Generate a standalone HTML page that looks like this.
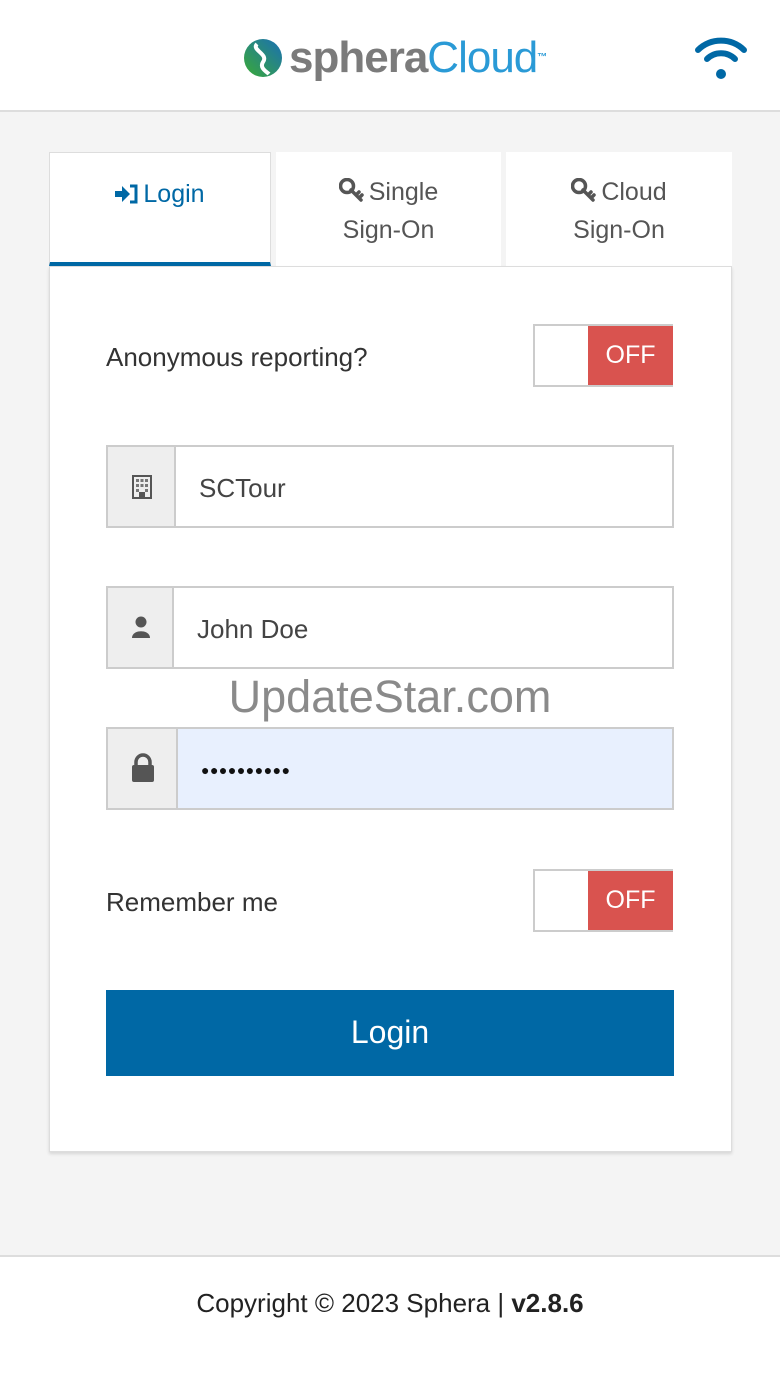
<!DOCTYPE html>
<html><head><meta charset="utf-8"><style>
*{box-sizing:border-box;margin:0;padding:0}
body{width:780px;height:1387px;background:#f4f4f4;font-family:"Liberation Sans",sans-serif;position:relative;overflow:hidden;color:#333}
.abs{position:absolute}
#hdr{left:0;top:0;width:780px;height:112px;background:#fff;border-bottom:2px solid #ddd}
.tab{top:152px;height:114px;background:#fff;text-align:center;font-size:25px;color:#555;line-height:38px}
.card{left:49px;top:266px;width:683px;height:886px;background:#fff;border:1px solid #ddd;box-shadow:0 2px 3px rgba(0,0,0,.12)}
.lbl{font-size:26px;color:#333}
.tog{width:140px;height:63px;border:2px solid #ccc;background:#fff}
.tog div{position:absolute;left:53px;top:0;width:85px;height:59px;background:#d9534f;color:#fff;font-size:25px;text-align:center;line-height:59px}
.inp{left:106px;width:568px;height:83px;border:2px solid #ccc;background:#fff}
.ib{position:absolute;left:0;top:0;height:79px;background:#eee;border-right:2px solid #ccc}
.it{position:absolute;top:2px;line-height:79px;font-size:26px;color:#444}
.key{display:inline-block;vertical-align:-2px;margin-right:4px}
</style></head><body>
<div id="hdr" class="abs">
<svg class="abs" style="left:243px;top:38px" width="42" height="40" viewBox="0 0 42 40"><defs><linearGradient id="g" x1="0" y1="1" x2="1" y2="0"><stop offset="0" stop-color="#3aaa35"/><stop offset="1" stop-color="#1a6fb5"/></linearGradient></defs><circle cx="20" cy="20" r="19" fill="url(#g)"/><path d="M14 6 C8 12 26 16 20 24 C16 30 24 34 26 36" stroke="#fff" stroke-width="4" fill="none"/></svg>
<div class="abs" style="left:289px;top:32px;font-size:44px;font-weight:bold;letter-spacing:-1px;line-height:52px"><span style="color:#7b7b7b">sphera</span><span style="color:#2a9ad6;font-weight:normal">Cloud</span><sup style="font-size:10px;color:#2a9ad6;vertical-align:top">™</sup></div>
<svg class="abs" style="left:694px;top:36px" width="54" height="44" viewBox="0 0 54 44"><path d="M4 14 A33 33 0 0 1 50 14" stroke="#0068a5" stroke-width="6" fill="none" stroke-linecap="round"/><path d="M13 23 A20 20 0 0 1 41 23" stroke="#0068a5" stroke-width="6" fill="none" stroke-linecap="round"/><circle cx="27" cy="38" r="5" fill="#0068a5"/></svg>
</div>
<div class="abs tab" style="left:49px;width:222px;border:1px solid #ddd;border-bottom:4px solid #0068a5;padding-top:22px;color:#0068a5"><svg class="key" width="24" height="20" viewBox="0 0 24 20"><path d="M0 7 H7 V2 L15 10 L7 18 V13 H0 Z" fill="#0068a5"/><path d="M15 2 H21 V18 H15" stroke="#0068a5" stroke-width="3" fill="none"/></svg>Login</div>
<div class="abs tab" style="left:276px;width:225px;padding-top:21px"><svg class="key" width="26" height="24" viewBox="0 0 26 24"><circle cx="8" cy="8" r="6.5" fill="none" stroke="#555" stroke-width="3.5"/><path d="M12 12 L22 22 M17 17 L20 14 M20 20 L23 17" stroke="#555" stroke-width="3.5" stroke-linecap="round"/></svg>Single<br>Sign-On</div>
<div class="abs tab" style="left:506px;width:226px;padding-top:21px"><svg class="key" width="26" height="24" viewBox="0 0 26 24"><circle cx="8" cy="8" r="6.5" fill="none" stroke="#555" stroke-width="3.5"/><path d="M12 12 L22 22 M17 17 L20 14 M20 20 L23 17" stroke="#555" stroke-width="3.5" stroke-linecap="round"/></svg>Cloud<br>Sign-On</div>
<div class="abs card"></div>
<div class="abs lbl" style="left:106px;top:342px">Anonymous reporting?</div>
<div class="abs tog" style="left:533px;top:324px"><div>OFF</div></div>
<div class="abs inp" style="top:445px"><div class="ib" style="width:68px"><svg style="position:absolute;left:24px;top:28px" width="20" height="24" viewBox="0 0 20 24"><rect x="1" y="1" width="18" height="22" fill="none" stroke="#555" stroke-width="2"/><g fill="#777"><rect x="4" y="4" width="3" height="3"/><rect x="8.5" y="4" width="3" height="3"/><rect x="13" y="4" width="3" height="3"/><rect x="4" y="9" width="3" height="3"/><rect x="8.5" y="9" width="3" height="3"/><rect x="13" y="9" width="3" height="3"/><rect x="4" y="14" width="3" height="3"/><rect x="13" y="14" width="3" height="3"/></g><rect x="7" y="17" width="6" height="6" fill="#555"/></svg></div><div class="it" style="left:91px">SCTour</div></div>
<div class="abs inp" style="top:586px"><div class="ib" style="width:66px"><svg style="position:absolute;left:23px;top:28px" width="20" height="22" viewBox="0 0 20 22"><circle cx="10" cy="6" r="5.5" fill="#555"/><path d="M1 22 C1 13 19 13 19 22 Z" fill="#555"/></svg></div><div class="it" style="left:89px">John Doe</div></div>
<div class="abs inp" style="top:727px;background:#e8f0fe"><div class="ib" style="width:70px"><svg style="position:absolute;left:23px;top:24px" width="24" height="30" viewBox="0 0 24 30"><path d="M5 13 V9 A7 7 0 0 1 19 9 V13" stroke="#555" stroke-width="3.5" fill="none"/><rect x="1" y="12" width="22" height="17" rx="2" fill="#555"/></svg></div><div class="it" style="left:93px;font-size:14px;letter-spacing:0.5px;color:#111">●●●●●●●●●●</div></div>
<div class="abs" style="left:0;width:780px;top:671px;text-align:center;font-size:45px;color:#8a8a8a">UpdateStar.com</div>
<div class="abs lbl" style="left:106px;top:887px">Remember me</div>
<div class="abs tog" style="left:533px;top:869px"><div>OFF</div></div>
<div class="abs" style="left:106px;top:990px;width:568px;height:86px;background:#0068a5;color:#fff;font-size:32px;text-align:center;line-height:84px">Login</div>
<div class="abs" style="left:0;top:1255px;width:780px;height:132px;background:#fff;border-top:2px solid #ddd;text-align:center;font-size:26px;line-height:92px;color:#222">Copyright © 2023 Sphera | <b>v2.8.6</b></div>
</body></html>
